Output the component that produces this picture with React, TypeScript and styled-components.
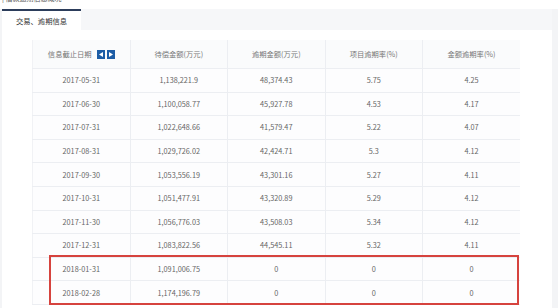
import React from 'react'
import styled, { createGlobalStyle } from 'styled-components'

const GlobalStyle = createGlobalStyle`
    html, body {
        margin: 0;
        padding: 0;
        background: #f3f4f6;
    }
    body {
        font-family: "Noto Sans CJK SC", "Noto Sans", sans-serif;
    }
`

const Page = styled.div`
    width: 558px;
    height: 308px;
    overflow: hidden;
    display: flex;
    flex-direction: column;
    background: #fff;
`
const TopTitle = styled.div`
    height: 9px;
    overflow: hidden;
    padding-left: 2px;
    background: #fff;
    span {
        display: block;
        margin-top: -6px;
        font-size: 7px;
        line-height: 8px;
        color: #555;
    }
`
const MainRow = styled.div`
    flex: 1;
    display: flex;
    background: #f3f4f6;
`
const Panel = styled.div`
    width: 550px;
    margin-left: 2px;
    background: #fff;
    display: flex;
    flex-direction: column;
`
const TabBar = styled.div`
    height: 21px;
    display: flex;
    background: #f6f7f9;
`
const Tab = styled.div<{ active?: boolean }>`
    width: 79px;
    box-sizing: border-box;
    display: flex;
    align-items: center;
    justify-content: center;
    font-size: 7.3px;
    color: #333;
    background: ${(props) => props.active ? '#fff' : 'transparent'};
    border-top: 2px solid ${(props) => props.active ? '#2c3d5b' : 'transparent'};
`
const PanelBody = styled.div`
    padding: 10px 0 0 30px;
`
const TableWrap = styled.div`
    position: relative;
    width: 488px;
`
const Table = styled.table`
    width: 100%;
    border-collapse: collapse;
    table-layout: fixed;
    font-size: 7.3px;
    color: #666;
    border-left: 1px solid #f1f2f5;
`
const HeadCell = styled.th`
    height: 28px;
    padding: 0;
    font-weight: normal;
    text-align: center;
    color: #777;
    background: #fafbfc;
    border-right: 1px solid #eceef2;
    border-bottom: 1px solid #eceef2;
    &:last-child {
        border-right: none;
    }
`
const Cell = styled.td`
    height: 23.6px;
    padding: 0;
    box-sizing: border-box;
    text-align: center;
    background: #fdfdfe;
    border-right: 1px solid #eceef2;
    border-bottom: 1px solid #eceef2;
    &:last-child {
        border-right: none;
    }
`
const HeadInner = styled.div`
    display: flex;
    align-items: center;
    justify-content: center;
    gap: 5px;
`
const ArrowGroup = styled.div`
    display: flex;
    gap: 2px;
`
const ArrowButton = styled.span`
    width: 8px;
    height: 9px;
    background: #1d5da6;
    display: flex;
    align-items: center;
    justify-content: center;
`
const Highlight = styled.div`
    position: absolute;
    left: 17px;
    top: 215px;
    width: 470px;
    height: 50px;
    box-sizing: border-box;
    border: 2px solid #d6433e;
    pointer-events: none;
`

const rows = [
    ['2017-05-31', '1,138,221.9', '48,374.43', '5.75', '4.25'],
    ['2017-06-30', '1,100,058.77', '45,927.78', '4.53', '4.17'],
    ['2017-07-31', '1,022,648.66', '41,579.47', '5.22', '4.07'],
    ['2017-08-31', '1,029,726.02', '42,424.71', '5.3', '4.12'],
    ['2017-09-30', '1,053,556.19', '43,301.16', '5.27', '4.11'],
    ['2017-10-31', '1,051,477.91', '43,320.89', '5.29', '4.12'],
    ['2017-11-30', '1,056,776.03', '43,508.03', '5.34', '4.12'],
    ['2017-12-31', '1,083,822.56', '44,545.11', '5.32', '4.11'],
    ['2018-01-31', '1,091,006.75', '0', '0', '0'],
    ['2018-02-28', '1,174,196.79', '0', '0', '0'],
]

const Arrow = (props: { dir: 'left' | 'right' }) => (
    <ArrowButton>
        <svg width="4" height="5" viewBox="0 0 4 5">
            {props.dir === 'left'
                ? <polygon points="4,0 4,5 0,2.5" fill="#fff" />
                : <polygon points="0,0 0,5 4,2.5" fill="#fff" />}
        </svg>
    </ArrowButton>
)

export default function App() {
    return (
        <Page>
            <GlobalStyle />
            <TopTitle><span>| 借款逾期信息概况</span></TopTitle>
            <MainRow>
                <Panel>
                    <TabBar>
                        <Tab active>交易、逾期信息</Tab>
                    </TabBar>
                    <PanelBody>
                        <TableWrap>
                            <Table>
                                <thead>
                                    <tr>
                                        <HeadCell>
                                            <HeadInner>
                                                信息截止日期
                                                <ArrowGroup>
                                                    <Arrow dir="left" />
                                                    <Arrow dir="right" />
                                                </ArrowGroup>
                                            </HeadInner>
                                        </HeadCell>
                                        <HeadCell>待偿金额(万元)</HeadCell>
                                        <HeadCell>逾期金额(万元)</HeadCell>
                                        <HeadCell>项目逾期率(%)</HeadCell>
                                        <HeadCell>金额逾期率(%)</HeadCell>
                                    </tr>
                                </thead>
                                <tbody>
                                    {rows.map((row) => (
                                        <tr key={row[0]}>
                                            {row.map((value, i) => (
                                                <Cell key={i}>{value}</Cell>
                                            ))}
                                        </tr>
                                    ))}
                                </tbody>
                            </Table>
                            <Highlight />
                        </TableWrap>
                    </PanelBody>
                </Panel>
            </MainRow>
        </Page>
    )
}
